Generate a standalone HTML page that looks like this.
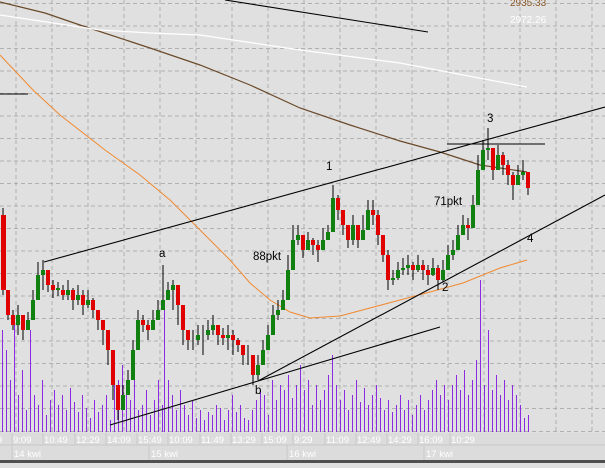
<!DOCTYPE html>
<html><head><meta charset="utf-8"><style>
body{margin:0;background:#e0e0e0;width:605px;height:463px;overflow:hidden;font-family:"Liberation Sans",sans-serif}
</style></head><body>
<svg width="605" height="463" viewBox="0 0 605 463" xmlns="http://www.w3.org/2000/svg" font-family="Liberation Sans, sans-serif">
<rect width="605" height="463" fill="#e0e0e0"/>
<g stroke="#b0b0b0" stroke-dasharray="4,3" stroke-width="1">
<path d="M16 0V432M52 0V432M88 0V432M124 0V432M160 0V432M196 0V432M232 0V432M268 0V432M304 0V432M340 0V432M376 0V432M412 0V432M448 0V432M484 0V432M520 0V432M556 0V432M592 0V432"/>
<path d="M0 3.5H605M0 26H605M0 48.5H605M0 71H605M0 93.5H605M0 116H605M0 138.5H605M0 161H605M0 183.5H605M0 206H605M0 228.5H605M0 251H605M0 273.5H605M0 296H605M0 318.5H605M0 341H605M0 363.5H605M0 386H605M0 408.5H605M0 431.5H605"/>
</g>
<!-- volume -->
<path stroke="#8a2be2" stroke-width="1" shape-rendering="crispEdges" fill="none" d="M2.5 432V330M6.5 432V350M10.5 432V380M14.5 432V320M18.5 432V395M22.5 432V370M26.5 432V410M30.5 432V330M34.5 432V395M38.5 432V405M42.5 432V380M46.5 432V415M50.5 432V400M54.5 432V390M58.5 432V405M62.5 432V395M66.5 432V410M70.5 432V388M74.5 432V402M78.5 432V412M82.5 432V395M86.5 432V408M90.5 432V418M94.5 432V400M98.5 432V412M102.5 432V405M106.5 432V395M110.5 432V420M114.5 432V350M118.5 432V380M122.5 432V365M126.5 432V390M130.5 432V400M134.5 432V375M138.5 432V410M142.5 432V405M146.5 432V390M150.5 432V415M154.5 432V400M158.5 432V380M162.5 432V405M164.5 432V300M168.5 432V380M172.5 432V395M176.5 432V410M180.5 432V390M184.5 432V405M188.5 432V415M192.5 432V400M196.5 432V418M200.5 432V410M204.5 432V420M208.5 432V412M212.5 432V415M216.5 432V405M220.5 432V408M224.5 432V420M228.5 432V410M232.5 432V395M236.5 432V412M240.5 432V405M244.5 432V418M248.5 432V420M252.5 432V410M256.5 432V400M260.5 432V390M264.5 432V395M268.5 432V415M272.5 432V380M276.5 432V400M280.5 432V385M284.5 432V390M288.5 432V375M292.5 432V398M296.5 432V385M300.5 432V365M304.5 432V390M308.5 432V380M312.5 432V405M316.5 432V385M320.5 432V400M324.5 432V390M328.5 432V375M332.5 432V355M336.5 432V385M340.5 432V400M344.5 432V390M348.5 432V410M352.5 432V395M356.5 432V380M360.5 432V402M364.5 432V388M368.5 432V405M372.5 432V395M376.5 432V385M380.5 432V398M384.5 432V410M388.5 432V400M392.5 432V412M396.5 432V405M400.5 432V395M404.5 432V410M408.5 432V400M412.5 432V415M416.5 432V405M420.5 432V395M424.5 432V410M428.5 432V400M432.5 432V390M436.5 432V380M440.5 432V395M444.5 432V385M448.5 432V400M452.5 432V385M456.5 432V375M460.5 432V390M464.5 432V370M468.5 432V395M472.5 432V380M476.5 432V360M480.5 432V280M484.5 432V385M488.5 432V330M492.5 432V390M496.5 432V375M500.5 432V395M504.5 432V380M508.5 432V400M512.5 432V385M516.5 432V395M520.5 432V405M524.5 432V418M528.5 432V415"/>
<!-- moving averages -->
<polyline fill="none" stroke="#6b4a2a" stroke-width="1.2" points="0,2 45,13 80,25 150,48 200,65 250,85 300,108 350,125 400,141 440,152 480,165 527,172"/>
<polyline fill="none" stroke="#ffffff" stroke-width="1.2" points="0,15 100,30 150,33 200,35 300,50 400,63 527,87"/>
<polyline fill="none" stroke="#f08a30" stroke-width="1" points="0,55 33,90 60,115 105,150 140,175 170,200 190,220 210,240 230,260 250,283 270,300 290,312 310,318 340,316 370,308 400,300 430,292 463,283 500,268 527,260"/>
<!-- trend lines -->
<g stroke="#000" stroke-width="1.1" fill="none">
<path d="M44 262L605 107"/>
<path d="M110 425L258 381L605 195"/>
<path d="M258 381L440 327"/>
<path d="M0 94H28"/>
<path d="M225 0L428 32"/>
<path d="M447 144H545"/>
</g>
<!-- wicks -->
<path stroke="#000" stroke-width="1" d="M3 208V295M8 300V320M13 310V330M18 305V335M23 315V340M28 312V330M33 290V320M38 262V282M43 260V290M48 275V292M53 280V298M58 282V296M63 285V300M68 280V300M73 288V310M78 285V305M83 290V315M88 290V308M93 298V318M98 310V330M103 320V345M108 340V365M113 370V400M118 395V420M123 385V410M128 370V395M133 340V370M138 310V330M143 315V332M148 320V340M153 310V330M158 300V318M163 265V300M168 282V300M173 280V310M178 295V325M183 320V345M188 330V350M193 330V350M198 325V345M203 325V355M208 320V340M213 315V335M218 325V345M223 328V345M228 325V350M233 330V355M238 338V352M243 345V365M248 345V365M253 365V385M258 355V380M263 340V360M268 325V350M273 305V325M278 300V320M283 290V310M288 255V280M293 225V250M298 225V245M303 235V258M308 232V250M313 238V255M318 240V262M323 228V250M328 225V240M333 185V215M338 195V220M343 210V235M348 225V248M353 215V245M358 228V248M363 215V240M368 200V222M373 200V225M378 210V245M383 240V262M388 250V290M393 270V285M398 262V280M403 258V275M408 255V275M413 262V280M418 255V272M423 260V280M428 265V285M433 258V276M438 265V290M443 260V282M448 245V268M453 240V260M458 225V245M463 215V235M468 218V240M473 195V215M478 155V180M483 140V160M488 128V160M493 150V180M498 145V165M503 152V175M508 160V185M513 172V200M518 165V185M523 160V180M528 175V195"/>
<g fill="#e00000">
<rect x="1" y="215" width="5" height="75"/><rect x="6" y="290" width="4" height="25"/><rect x="11" y="315" width="4" height="10"/><rect x="21" y="315" width="4" height="15"/><rect x="46" y="270" width="4" height="15"/><rect x="51" y="285" width="4" height="5"/><rect x="61" y="290" width="4" height="5"/><rect x="71" y="290" width="4" height="10"/><rect x="81" y="295" width="4" height="10"/><rect x="91" y="300" width="4" height="10"/><rect x="96" y="310" width="4" height="10"/><rect x="101" y="320" width="4" height="10"/><rect x="106" y="330" width="4" height="20"/><rect x="111" y="350" width="4" height="35"/><rect x="116" y="385" width="4" height="25"/><rect x="141" y="320" width="4" height="5"/><rect x="146" y="325" width="4" height="5"/><rect x="176" y="285" width="4" height="20"/><rect x="181" y="305" width="4" height="25"/><rect x="186" y="330" width="4" height="10"/><rect x="216" y="325" width="4" height="10"/><rect x="221" y="335" width="4" height="3"/><rect x="231" y="335" width="4" height="5"/><rect x="236" y="340" width="4" height="5"/><rect x="241" y="345" width="4" height="10"/><rect x="251" y="355" width="4" height="20"/><rect x="301" y="235" width="4" height="15"/><rect x="311" y="240" width="4" height="5"/><rect x="316" y="245" width="4" height="5"/><rect x="336" y="198" width="4" height="12"/><rect x="341" y="210" width="4" height="15"/><rect x="346" y="225" width="4" height="15"/><rect x="356" y="225" width="4" height="15"/><rect x="371" y="210" width="4" height="5"/><rect x="376" y="215" width="4" height="20"/><rect x="381" y="235" width="4" height="20"/><rect x="386" y="255" width="4" height="25"/><rect x="411" y="265" width="4" height="5"/><rect x="421" y="265" width="4" height="5"/><rect x="426" y="270" width="4" height="5"/><rect x="436" y="268" width="4" height="12"/><rect x="466" y="225" width="4" height="3"/><rect x="491" y="148" width="4" height="22"/><rect x="501" y="155" width="4" height="10"/><rect x="506" y="165" width="4" height="10"/><rect x="511" y="175" width="4" height="10"/><rect x="526" y="172" width="4" height="16"/>
</g>
<g fill="#108010">
<rect x="16" y="315" width="4" height="10"/><rect x="26" y="320" width="4" height="10"/><rect x="31" y="300" width="4" height="20"/><rect x="36" y="275" width="4" height="25"/><rect x="41" y="270" width="4" height="5"/><rect x="56" y="288" width="4" height="2"/><rect x="66" y="290" width="4" height="5"/><rect x="76" y="295" width="4" height="5"/><rect x="86" y="300" width="4" height="5"/><rect x="121" y="395" width="4" height="15"/><rect x="126" y="380" width="4" height="15"/><rect x="131" y="350" width="4" height="30"/><rect x="136" y="320" width="4" height="30"/><rect x="151" y="320" width="4" height="10"/><rect x="156" y="310" width="4" height="10"/><rect x="161" y="300" width="4" height="10"/><rect x="166" y="290" width="4" height="10"/><rect x="171" y="285" width="4" height="5"/><rect x="196" y="335" width="4" height="5"/><rect x="206" y="330" width="4" height="5"/><rect x="211" y="325" width="4" height="5"/><rect x="226" y="335" width="4" height="3"/><rect x="256" y="365" width="4" height="10"/><rect x="261" y="350" width="4" height="15"/><rect x="266" y="335" width="4" height="15"/><rect x="271" y="315" width="4" height="20"/><rect x="276" y="310" width="4" height="5"/><rect x="281" y="300" width="4" height="10"/><rect x="286" y="270" width="4" height="30"/><rect x="291" y="240" width="4" height="30"/><rect x="296" y="235" width="4" height="5"/><rect x="306" y="240" width="4" height="10"/><rect x="321" y="240" width="4" height="10"/><rect x="326" y="232" width="4" height="8"/><rect x="331" y="198" width="4" height="34"/><rect x="351" y="225" width="4" height="15"/><rect x="361" y="230" width="4" height="10"/><rect x="366" y="210" width="4" height="20"/><rect x="391" y="278" width="4" height="2"/><rect x="396" y="270" width="4" height="8"/><rect x="401" y="268" width="4" height="2"/><rect x="406" y="265" width="4" height="3"/><rect x="416" y="265" width="4" height="5"/><rect x="431" y="268" width="4" height="7"/><rect x="441" y="270" width="4" height="10"/><rect x="446" y="255" width="4" height="15"/><rect x="451" y="250" width="4" height="5"/><rect x="456" y="235" width="4" height="15"/><rect x="461" y="225" width="4" height="10"/><rect x="471" y="205" width="4" height="23"/><rect x="476" y="170" width="4" height="35"/><rect x="481" y="150" width="4" height="20"/><rect x="486" y="148" width="4" height="2"/><rect x="496" y="155" width="4" height="15"/><rect x="516" y="175" width="4" height="10"/><rect x="521" y="172" width="4" height="3"/>
</g>
<!-- labels -->
<g font-size="11.5" fill="#000">
<text x="326" y="170">1</text><text x="487" y="122">3</text><text x="159" y="257">a</text><text x="255" y="394">b</text><text x="442" y="291">2</text><text x="527" y="242">4</text>
<text x="253" y="260">88pkt</text><text x="434" y="205">71pkt</text>
</g>
<text x="510" y="6" font-size="10" fill="#8b5a2b">2935.33</text>
<text x="510" y="23" font-size="10" fill="#ffffff">2972.26</text>
<!-- axis -->
<rect x="0" y="433" width="605" height="30" fill="#dcdcdc"/>
<path stroke="#c8c8c8" d="M0 445H605M12 433V445M43 433V445M75 433V445M106 433V445M137 433V445M168 433V445M200 433V445M231 433V445M262 433V445M293 433V445M325 433V445M356 433V445M387 433V445M418 433V445M450 433V445M12 445V460M149 445V460M287 445V460M424 445V460"/>
<g font-size="9.5" fill="#ffffff">
<text x="-3" y="443">9</text><text x="13" y="443">9:09</text><text x="44" y="443">10:49</text><text x="76" y="443">12:29</text><text x="107" y="443">14:09</text><text x="138" y="443">15:49</text><text x="169" y="443">10:09</text><text x="201" y="443">11:49</text><text x="232" y="443">13:29</text><text x="263" y="443">15:09</text><text x="294" y="443">9:29</text><text x="326" y="443">11:09</text><text x="357" y="443">12:49</text><text x="388" y="443">14:29</text><text x="419" y="443">16:09</text><text x="451" y="443">10:29</text>
<text x="14" y="457">14 kwi</text><text x="151" y="457">15 kwi</text><text x="289" y="457">16 kwi</text><text x="426" y="457">17 kwi</text>
</g>
<rect x="0" y="460" width="605" height="3" fill="#505050"/>
</svg>
</body></html>
